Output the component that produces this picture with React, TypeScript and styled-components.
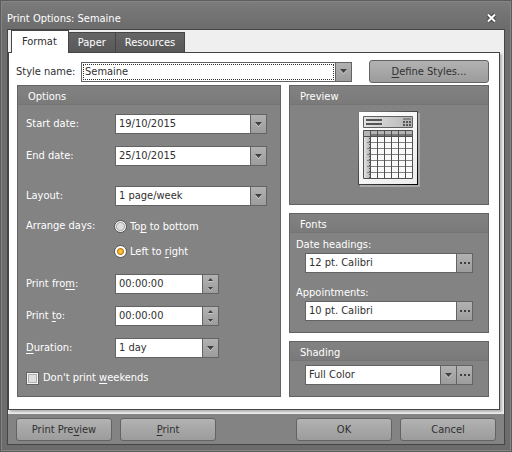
import React, { ReactNode } from 'react';
import styled, { createGlobalStyle, css } from 'styled-components';

const GlobalStyle = createGlobalStyle`
  *, *::before, *::after { box-sizing: border-box; }
  body { margin: 0; background: #6e6e6e; }
  body, button, input, select {
    font-family: 'DejaVu Sans Condensed', 'Noto Sans', sans-serif;
    font-size: 11px;
    line-height: 16px;
  }
  label, span, h1, button { white-space: nowrap; }
  u { text-decoration-skip-ink: none; text-underline-offset: 2px; text-decoration-thickness: 1px; }
`;

const ink = '#303030';
const line = '#636363';
const dark = '#454545';
const face = 'linear-gradient(#b2b2b2, #9c9c9c)';

const Dialog = styled.main`
  display: flex;
  flex-direction: column;
  min-height: 100vh;
  padding: 0 6px 6px;
  border: 1px solid #5c5c5c;
  box-shadow: inset 0 0 0 1px #858585;
  background: linear-gradient(#7b7b7b, #6c6c6c 28px);
`;

const TitleBar = styled.header`
  display: flex;
  align-items: center;
  justify-content: space-between;
  height: 28px;
  padding: 6px 8px 0 0;
  color: #fff;
`;

const Title = styled.h1`
  margin: 0;
  padding-top: 1px;
  font-size: 11px;
  font-weight: 400;
`;

const CloseButton = styled.button`
  display: flex;
  padding: 0;
  border: 0;
  background: none;
`;

const Body = styled.div`
  display: flex;
  flex-direction: column;
  flex: 1;
  border: 1px solid ${dark};
  background: #838383;
`;

const Tabs = styled.div`
  display: flex;
  align-items: flex-end;
  height: 22px;
  padding-left: 3px;
  background: #efefef;
`;

const Tab = styled.button<{ $active?: boolean }>`
  height: 20px;
  padding: 0 9px;
  border: 1px solid ${dark};
  border-bottom: 0;
  border-left-width: 0;
  background: linear-gradient(#666, #585858);
  color: #fff;
  ${(p) =>
    p.$active &&
    css`
      z-index: 1;
      height: 23px;
      margin-bottom: -1px;
      padding: 0 11px 0 10px;
      border-left-width: 1px;
      background: #fff;
      color: ${ink};
    `}
`;

const PageArea = styled.div`
  display: flex;
  flex: 1;
  padding: 0 4px 4px 0;
  background: #efefef;
`;

const Page = styled.div`
  display: flex;
  flex-direction: column;
  gap: 2px;
  flex: 1;
  min-width: 0;
  padding: 7px 10px 12px 8px;
  border: 1px solid ${dark};
  background: #fff;
  box-shadow: 2px 2px 2px #b5b5b5;
  color: ${ink};
`;

const StyleRow = styled.div`
  display: flex;
  align-items: center;
  gap: 17px;
`;

const StyleField = styled.div`
  display: grid;
  grid-template-columns: 65px 1fr;
  align-items: center;
  flex: 1;
  margin-left: -1px;
`;

const Button = styled.button<{ $wide?: boolean }>`
  width: ${(p) => (p.$wide ? 120 : 96)}px;
  height: 23px;
  padding: 0;
  border: 1px solid ${line};
  border-radius: 3px;
  background: ${face};
  color: ${ink};
`;

const Columns = styled.div`
  display: flex;
  gap: 8px;
  flex: 1;
`;

const Side = styled.div`
  display: flex;
  flex-direction: column;
  gap: 8px;
  width: 200px;
`;

const Panel = styled.section<{ $grow?: boolean }>`
  flex: ${(p) => (p.$grow ? '1' : 'none')};
  border: 1px solid ${line};
  background: #838383;
  color: #fff;
`;

const PanelTitle = styled.h2`
  height: 19px;
  margin: 0;
  padding: 3px 10px 0;
  border-bottom: 1px solid #757575;
  background: linear-gradient(#828282, #7a7a7a);
  font-size: 11px;
  font-weight: 400;
  line-height: 15px;
`;

const OptionsForm = styled.div`
  display: flex;
  flex-direction: column;
  gap: 12px;
  padding: 9px 13px 10px 8px;
`;

const FormRow = styled.div<{ $spaced?: boolean }>`
  display: grid;
  grid-template-columns: 89px 1fr;
  align-items: center;
  margin-top: ${(p) => (p.$spaced ? 8 : 0)}px;
`;

const Group = styled.fieldset`
  display: grid;
  grid-template-columns: 89px 1fr;
  margin: 0;
  padding: 0;
  border: 0;
`;

const Radios = styled.div`
  display: flex;
  flex-direction: column;
  gap: 9px;
  padding: 1px 0 2px;
`;

const Choice = styled.label`
  display: flex;
  align-items: center;
  gap: 3px;
`;

const Radio = styled.input`
  appearance: none;
  width: 13px;
  height: 13px;
  margin: 0 0 1px -1px;
  border: 1px solid #585858;
  border-radius: 50%;
  background: radial-gradient(circle, #dedede 0 3px, #a8a8a8 4px, #f4f4f4 5px);
  &:checked {
    background: radial-gradient(circle, #ffd860 0, #f4ac18 2px, #b87a20 3px, #fff 4px);
  }
`;

const Check = styled.input`
  appearance: none;
  width: 13px;
  height: 13px;
  margin: 0 1px 0 0;
  border: 1px solid ${line};
  background: #dedede;
  box-shadow: inset 0 0 0 1px #f6f6f6, inset 0 0 0 2px #b0b0b0;
`;

const FieldBox = styled.div<{ $short?: boolean }>`
  display: flex;
  width: ${(p) => (p.$short ? '104px' : '100%')};
  height: 20px;
  border: 1px solid ${line};
  background: #fff;
`;

const TextBox = styled.input`
  flex: 1;
  width: 0;
  min-width: 0;
  padding: 0 3px;
  border: 0;
  outline: 0;
  background: none;
  color: ${ink};
`;

const EndButton = styled.button`
  display: flex;
  align-items: center;
  justify-content: center;
  width: 16px;
  padding: 0;
  border: 0;
  border-left: 1px solid ${line};
  background: ${face};
`;

const Spinner = styled.div`
  display: flex;
  flex-direction: column;
  width: 16px;
  border-left: 1px solid ${line};
  background: ${face};
`;

const SpinButton = styled.button`
  display: flex;
  align-items: center;
  justify-content: center;
  flex: 1;
  padding: 0;
  border: 0;
  background: none;
`;

const SelectBox = styled.div`
  display: grid;
  grid-template-columns: 1fr 16px;
  flex: 1;
  min-width: 0;
`;

const Select = styled.select<{ $focused?: boolean }>`
  appearance: none;
  grid-area: 1 / 1 / 2 / 3;
  width: 100%;
  min-width: 0;
  padding: 0 17px 0 3px;
  border: 0;
  outline: 0;
  background: none;
  color: ${ink};
  ${(p) =>
    p.$focused &&
    css`
      margin: 1px 17px 1px 1px;
      width: calc(100% - 18px);
      padding: 0 0 0 1px;
      border: 1px dotted #303030;
      line-height: 14px;
    `}
`;

const SelectArrow = styled.span`
  display: flex;
  align-items: center;
  justify-content: center;
  grid-area: 1 / 2;
  border-left: 1px solid ${line};
  background: ${face};
  pointer-events: none;
`;

const PreviewPane = styled.div`
  display: flex;
  justify-content: center;
  padding: 6px 0 17px;
`;

const FontsForm = styled.div`
  display: grid;
  padding: 4px 15px 11px 6px;
`;

const FontLabel = styled.label<{ $spaced?: boolean }>`
  margin-top: ${(p) => (p.$spaced ? 12 : 0)}px;
`;

const Indent = styled.div`
  padding-left: 9px;
`;

const ShadingForm = styled.div`
  padding: 4px 15px 11px;
`;

const Footer = styled.footer`
  display: flex;
  justify-content: space-between;
  padding: 4px 8px 3px;
`;

const ButtonPair = styled.div`
  display: flex;
  gap: 8px;
`;

const Arrow = () => (
  <svg width="7" height="5" viewBox="0 0 7 5" aria-hidden="true">
    <path d="M0 1h7L3.5 5z" fill="#d0d0d0" />
    <path d="M0 0h7L3.5 4z" fill="#404040" />
  </svg>
);

const SmallArrow = ({ up }: { up?: boolean }) => (
  <svg width="5" height="4" viewBox="0 0 5 4" aria-hidden="true">
    {up ? (
      <>
        <path d="M0 3h5v1H0z" fill="#c8c8c8" />
        <path d="M0 3h5L2.5 0z" fill="#404040" />
      </>
    ) : (
      <>
        <path d="M0 1h5L2.5 4z" fill="#d0d0d0" />
        <path d="M0 0h5L2.5 3z" fill="#404040" />
      </>
    )}
  </svg>
);

const Dots = () => (
  <svg width="10" height="2" viewBox="0 0 10 2" aria-hidden="true">
    <path d="M0 0h2v2H0zM4 0h2v2H4zM8 0h2v2H8z" fill="#404040" />
  </svg>
);

const CloseIcon = () => (
  <svg width="11" height="10" viewBox="0 0 11 10" aria-hidden="true">
    <path d="M2 1.5l7 7M9 1.5l-7 7" stroke="#484848" strokeWidth="4" />
    <path d="M2 1.5l7 7M9 1.5l-7 7" stroke="#fff" strokeWidth="2" />
  </svg>
);

const PagePreview = () => (
  <svg width="62" height="76" viewBox="0 0 62 76" role="img" aria-label="Calendar page">
    <defs>
      <linearGradient id="sheet" x1="0" y1="0" x2="1" y2="1">
        <stop offset="0" stopColor="#fff" />
        <stop offset="1" stopColor="#ececec" />
      </linearGradient>
      <linearGradient id="band" x1="0" y1="0" x2="1" y2="0">
        <stop offset="0" stopColor="#e4e4e4" />
        <stop offset="1" stopColor="#b4b4b4" />
      </linearGradient>
      <linearGradient id="edge" x1="0" y1="0" x2="1" y2="1">
        <stop offset="0" stopColor="#808080" />
        <stop offset="0.5" stopColor="#444" />
        <stop offset="1" stopColor="#000" />
      </linearGradient>
    </defs>
    <path d="M2 2h60v74H2z" fill="#a8a8a8" />
    <path d="M0 0h60v74H0z" fill="url(#edge)" />
    <path d="M1 1h58v72H1z" fill="url(#sheet)" />
    <path d="M5.5 5.5h49v11h-49z" fill="url(#band)" stroke="#606060" />
    <path d="M8 8h16v2H8zM8 12h16v2H8z" fill="#555" />
    <path d="M45 7h8v2h-8z" fill="#888" />
    <path d="M45 10h2v2h-2zM48 10h2v2h-2zM51 10h2v2h-2zM45 13h2v2h-2zM48 13h2v2h-2zM51 13h2v2h-2z" fill="#555" />
    <path d="M5 19h50v49H5z" fill="#fafafa" />
    <path d="M6 20h48v5H6z" fill="#b4b4b4" />
    <path d="M13 23h41v2H13z" fill="#777" />
    <path d="M6 26h6v41H6z" fill="url(#band)" />
    <path d="M9 31.5h45M9 37.5h45M9 43.5h45M9 49.5h45M9 55.5h45M9 61.5h45" stroke="#808080" />
    <path d="M5.5 19.5h49v48h-49zM12.5 20v47M19.5 20v47M26.5 20v47M33.5 20v47M40.5 20v47M47.5 20v47M6 25.5h48" fill="none" stroke="#505050" />
    <path d="M11.5 27v40" stroke="#555" strokeDasharray="1 2" />
  </svg>
);

type DropProps = { id: string; value: string; focused?: boolean; label?: string };

const DropDown = ({ id, value, focused, label }: DropProps) => (
  <SelectBox>
    <Select id={id} $focused={focused} defaultValue={value} aria-label={label}>
      <option>{value}</option>
    </Select>
    <SelectArrow>
      <Arrow />
    </SelectArrow>
  </SelectBox>
);

const DateField = ({ id, label, value }: { id: string; label: string; value: string }) => (
  <FormRow>
    <label htmlFor={id}>{label}</label>
    <FieldBox>
      <TextBox id={id} defaultValue={value} />
      <EndButton aria-label="Open calendar">
        <Arrow />
      </EndButton>
    </FieldBox>
  </FormRow>
);

const TimeField = ({ id, label, value }: { id: string; label: ReactNode; value: string }) => (
  <FormRow>
    <label htmlFor={id}>{label}</label>
    <FieldBox $short>
      <TextBox id={id} defaultValue={value} />
      <Spinner>
        <SpinButton aria-label="Later">
          <SmallArrow up />
        </SpinButton>
        <SpinButton aria-label="Earlier">
          <SmallArrow />
        </SpinButton>
      </Spinner>
    </FieldBox>
  </FormRow>
);

const FontField = ({ id, label, value, spaced }: { id: string; label: string; value: string; spaced?: boolean }) => (
  <>
    <FontLabel htmlFor={id} $spaced={spaced}>
      {label}
    </FontLabel>
    <Indent>
      <FieldBox>
        <TextBox id={id} defaultValue={value} />
        <EndButton aria-label="Choose font">
          <Dots />
        </EndButton>
      </FieldBox>
    </Indent>
  </>
);

export default function App() {
  return (
    <Dialog>
      <GlobalStyle />
      <TitleBar>
        <Title>Print Options: Semaine</Title>
        <CloseButton aria-label="Close">
          <CloseIcon />
        </CloseButton>
      </TitleBar>
      <Body>
        <Tabs role="tablist">
          <Tab role="tab" aria-selected="true" $active>
            Format
          </Tab>
          <Tab role="tab" aria-selected="false">
            Paper
          </Tab>
          <Tab role="tab" aria-selected="false">
            Resources
          </Tab>
        </Tabs>
        <PageArea>
          <Page>
            <StyleRow>
              <StyleField>
                <label htmlFor="style">Style name:</label>
                <FieldBox>
                  <DropDown id="style" value="Semaine" focused />
                </FieldBox>
              </StyleField>
              <Button $wide>
                <u>D</u>efine Styles...
              </Button>
            </StyleRow>
            <Columns>
              <Panel $grow>
                <PanelTitle>Options</PanelTitle>
                <OptionsForm>
                  <DateField id="start" label="Start date:" value="19/10/2015" />
                  <DateField id="end" label="End date:" value="25/10/2015" />
                  <FormRow $spaced>
                    <label htmlFor="layout">Layout:</label>
                    <FieldBox>
                      <DropDown id="layout" value="1 page/week" />
                    </FieldBox>
                  </FormRow>
                  <Group aria-labelledby="arrange">
                    <span id="arrange">Arrange days:</span>
                    <Radios>
                      <Choice>
                        <Radio type="radio" name="arrange" />
                        <span>
                          To<u>p</u> to bottom
                        </span>
                      </Choice>
                      <Choice>
                        <Radio type="radio" name="arrange" defaultChecked />
                        <span>
                          Left to <u>r</u>ight
                        </span>
                      </Choice>
                    </Radios>
                  </Group>
                  <TimeField id="from" label={<>Print fro<u>m</u>:</>} value="00:00:00" />
                  <TimeField id="to" label={<>Print <u>t</u>o:</>} value="00:00:00" />
                  <FormRow>
                    <label htmlFor="duration">
                      <u>D</u>uration:
                    </label>
                    <FieldBox $short>
                      <DropDown id="duration" value="1 day" />
                    </FieldBox>
                  </FormRow>
                  <Choice>
                    <Check type="checkbox" />
                    <span>
                      Don't print <u>w</u>eekends
                    </span>
                  </Choice>
                </OptionsForm>
              </Panel>
              <Side>
                <Panel>
                  <PanelTitle>Preview</PanelTitle>
                  <PreviewPane>
                    <PagePreview />
                  </PreviewPane>
                </Panel>
                <Panel>
                  <PanelTitle>Fonts</PanelTitle>
                  <FontsForm>
                    <FontField id="headings" label="Date headings:" value="12 pt. Calibri" />
                    <FontField id="appointments" label="Appointments:" value="10 pt. Calibri" spaced />
                  </FontsForm>
                </Panel>
                <Panel>
                  <PanelTitle>Shading</PanelTitle>
                  <ShadingForm>
                    <FieldBox>
                      <DropDown id="shading" value="Full Color" label="Shading" />
                      <EndButton aria-label="Shading options">
                        <Dots />
                      </EndButton>
                    </FieldBox>
                  </ShadingForm>
                </Panel>
              </Side>
            </Columns>
          </Page>
        </PageArea>
        <Footer>
          <ButtonPair>
            <Button>
              Print Pre<u>v</u>iew
            </Button>
            <Button>
              <u>P</u>rint
            </Button>
          </ButtonPair>
          <ButtonPair>
            <Button>OK</Button>
            <Button>Cancel</Button>
          </ButtonPair>
        </Footer>
      </Body>
    </Dialog>
  );
}
